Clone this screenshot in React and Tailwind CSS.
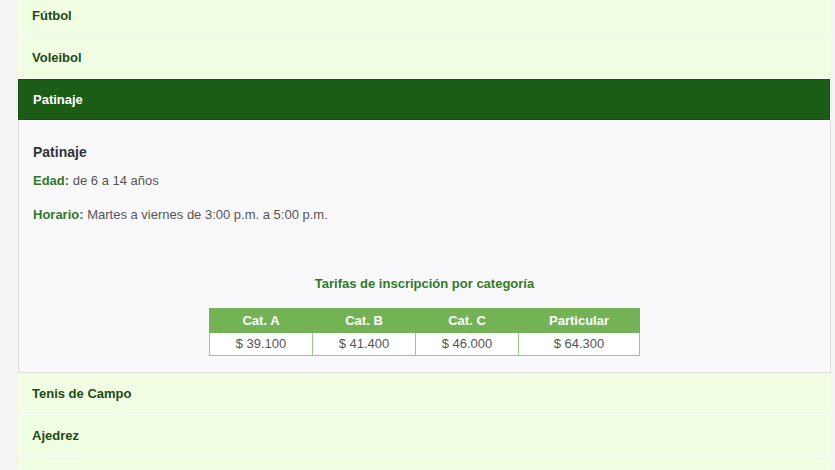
import React from 'react';

const rows = ['Fútbol', 'Voleibol'];
const after = ['Tenis de Campo', 'Ajedrez', ''];
const tarifas = [
    { cat: 'Cat. A', precio: '$ 39.100' },
    { cat: 'Cat. B', precio: '$ 41.400' },
    { cat: 'Cat. C', precio: '$ 46.000' },
    { cat: 'Particular', precio: '$ 64.300' },
];

function Row({ title }) {
    return (
        <div className="h-[42px] flex items-center px-[14px] bg-[#f1fde2] border-b border-[#f7fdf0] text-[13px] font-bold text-[#1d4a17]">
            {title}
        </div>
    );
}

export default function App() {
    return (
        <div className="w-[835px] h-[470px] overflow-hidden bg-[#f4f4f4] pl-[18px] pr-[4px]"
            style={{ fontFamily: '"Liberation Sans", Arial, sans-serif' }}>
            <div className="-mt-[5px]">
                {rows.map((r) => <Row key={r} title={r} />)}
                <div className="h-[41px] flex items-center px-[14px] bg-[#1b5c16] border border-[#164d12] text-[13px] font-bold text-white mr-[1px]">
                    Patinaje
                </div>
                <div className="h-[253px] bg-[#f9f9fc] border border-t-0 border-[#dcdcdc] px-[14px] pt-[23px]">
                    <h3 className="text-[14px] font-bold text-[#333] leading-[18px]">Patinaje</h3>
                    <p className="mt-[12px] text-[13px] text-[#555] leading-[16px]">
                        <span className="font-bold text-[#2f7a2a]">Edad:</span> de 6 a 14 años
                    </p>
                    <p className="mt-[18px] text-[13px] text-[#555] leading-[16px]">
                        <span className="font-bold text-[#2f7a2a]">Horario:</span> Martes a viernes de 3:00 p.m. a 5:00 p.m.
                    </p>
                    <p className="mt-[53px] text-center text-[13px] font-bold text-[#2f7a2a] leading-[16px]">
                        Tarifas de inscripción por categoría
                    </p>
                    <table className="mt-[16px] ml-[176px] border-collapse text-[13px]">
                        <thead>
                            <tr className="bg-[#74b355]">
                                {tarifas.map((t, i) => (
                                    <th key={t.cat}
                                        className={`h-[24px] p-0 border border-[#74b355] text-white font-bold ${i === 3 ? 'w-[121px]' : 'w-[103px]'}`}>
                                        {t.cat}
                                    </th>
                                ))}
                            </tr>
                        </thead>
                        <tbody>
                            <tr className="bg-white">
                                {tarifas.map((t) => (
                                    <td key={t.cat} className="h-[23px] p-0 border border-[#9cc58a] text-center text-[#555]">
                                        {t.precio}
                                    </td>
                                ))}
                            </tr>
                        </tbody>
                    </table>
                </div>
                {after.map((r, i) => <Row key={i} title={r} />)}
            </div>
        </div>
    );
}
